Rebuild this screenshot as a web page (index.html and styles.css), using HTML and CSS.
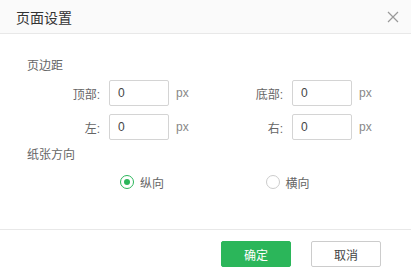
FILE: index.html
```html
<!DOCTYPE html>
<html>
<head>
	<title>页面设置</title>
	<link rel="stylesheet" href="styles.css">
</head>
<body>
<div class="dialog">
	<div class="header">
		<span class="title">页面设置</span>
		<svg class="close" width="12" height="12" viewBox="0 0 12 12">
			<path d="M1 1 L11 11 M11 1 L1 11" stroke="#999" stroke-width="1.2" fill="none"/>
		</svg>
	</div>

	<div class="body">
		<div class="section-title">页边距</div>
		<div class="fields">
			<div class="field">
				<label>顶部:</label>
				<input type="text" value="0">
				<span class="unit">px</span>
			</div>
			<div class="field">
				<label>底部:</label>
				<input type="text" value="0">
				<span class="unit">px</span>
			</div>
			<div class="field">
				<label>左:</label>
				<input type="text" value="0">
				<span class="unit">px</span>
			</div>
			<div class="field">
				<label>右:</label>
				<input type="text" value="0">
				<span class="unit">px</span>
			</div>
		</div>

		<div class="section-title second">纸张方向</div>
		<div class="radios">
			<div class="radio checked"><span class="dot"></span>纵向</div>
			<div class="radio"><span class="dot"></span>横向</div>
		</div>
	</div>

	<div class="footer">
		<button class="btn btn-ok">确定</button>
		<button class="btn btn-cancel">取消</button>
	</div>
</div>
</body>
</html>
```

FILE: styles.css
```css
body {
	margin: 0;
	font-family: "Liberation Sans", "Noto Sans CJK SC", sans-serif;
	background: #fff;
}

:root {
	--green: #2bb65a;
	--line: #e8e8e8;
}

.dialog {
	width: 411px;
	height: 275px;
	display: flex;
	flex-direction: column;
}

.header {
	height: 33px;
	border-bottom: 1px solid var(--line);
	background: #fafafa;
	padding: 0 12px 0 16px;
	display: flex;
	align-items: center;
	justify-content: space-between;
}
.title {
	font-size: 14px;
	color: #333;
}
.close {
	display: block;
}

.body {
	flex: 1;
	padding: 24px 0 0 27px;
}
.section-title {
	font-size: 12px;
	line-height: 16px;
	color: #666;
}
.section-title.second {
	margin-top: 7px;
}

.fields {
	display: grid;
	grid-template-columns: 183px 183px;
	row-gap: 8px;
	margin-top: 6px;
}
.field {
	display: flex;
	align-items: center;
	height: 26px;
}
.field label {
	width: 73px;
	text-align: right;
	font-size: 12px;
	color: #666;
	margin-right: 9px;
}
.field input {
	box-sizing: border-box;
	width: 60px;
	height: 26px;
	border: 1px solid #d4d4d4;
	border-radius: 2px;
	padding: 0 8px;
	font-family: inherit;
	font-size: 12px;
	color: #444;
	outline: none;
}
.unit {
	margin-left: 7px;
	font-size: 12px;
	color: #888;
}

.radios {
	display: flex;
	margin: 9px 0 0 93px;
	height: 20px;
}
.radio {
	width: 154px;
	display: flex;
	align-items: center;
	font-size: 12px;
	color: #666;
}
.dot {
	box-sizing: border-box;
	width: 14px;
	height: 14px;
	border: 1px solid #ccc;
	border-radius: 50%;
	margin-right: 6px;
	display: flex;
	align-items: center;
	justify-content: center;
}
.radio.checked .dot {
	border-color: var(--green);
}
.radio.checked .dot::after {
	content: "";
	width: 6px;
	height: 6px;
	border-radius: 50%;
	background: var(--green);
}

.footer {
	height: 45px;
	border-top: 1px solid var(--line);
	display: flex;
	justify-content: flex-end;
	align-items: flex-start;
	padding: 11px 30px 0 0;
	box-sizing: border-box;
	height: 46px;
	gap: 20px;
}
.btn {
	width: 70px;
	height: 26px;
	border-radius: 2px;
	font-family: inherit;
	font-size: 12px;
	cursor: pointer;
}
.btn-ok {
	background: var(--green);
	border: 1px solid var(--green);
	color: #fff;
}
.btn-cancel {
	background: #fff;
	border: 1px solid #ccc;
	color: #444;
}
```
